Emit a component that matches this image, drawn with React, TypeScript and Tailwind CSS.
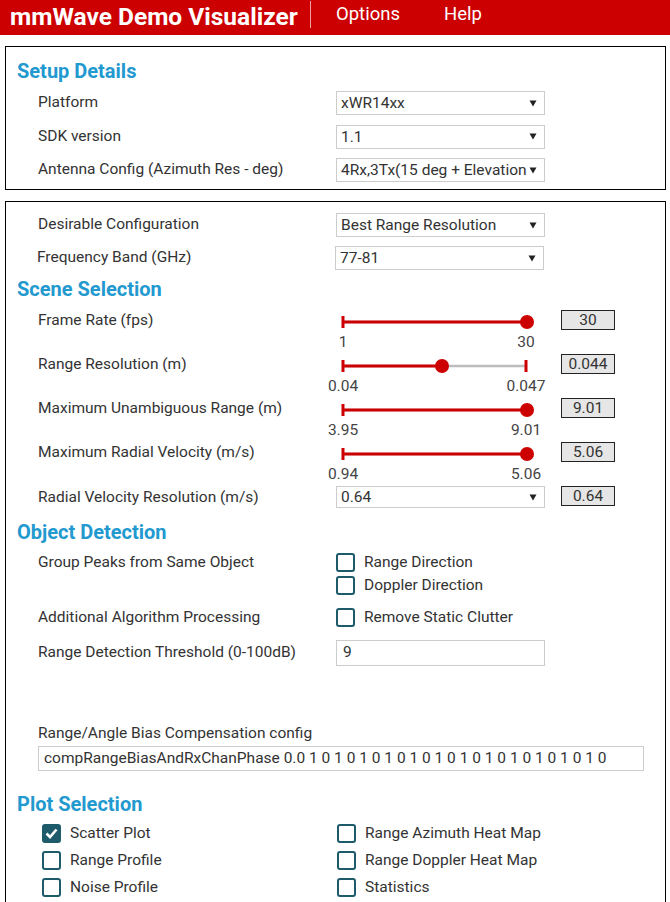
import React from 'react';

const sliders = [
  { label: "Frame Rate (fps)", pos: 191, min: "1", max: "30", val: "30" },
  { label: "Range Resolution (m)", pos: 106, min: "0.04", max: "0.047", val: "0.044" },
  { label: "Maximum Unambiguous Range (m)", pos: 191, min: "3.95", max: "9.01", val: "9.01" },
  { label: "Maximum Radial Velocity (m/s)", pos: 191, min: "0.94", max: "5.06", val: "5.06" },
];

const plots = [
  { left: "Scatter Plot", leftOn: true, right: "Range Azimuth Heat Map" },
  { left: "Range Profile", leftOn: false, right: "Range Doppler Heat Map" },
  { left: "Noise Profile", leftOn: false, right: "Statistics" },
];

function Arrow() {
  return (
    <svg width="8" height="7" viewBox="0 0 8 7" className="shrink-0">
      <path d="M0.5 0.5h7L4 6.5z" fill="#222" />
    </svg>
  );
}

function Select({ value, height = "h-[24px]" }: { value: string; height?: string }) {
  return (
    <div className={`${height} w-[209px] border border-[#cccccc] bg-white flex items-center pl-[4px] pr-[7px] text-[#333]`}>
      <span className="flex-1 whitespace-nowrap overflow-hidden pt-[2px]">{value}</span>
      <Arrow />
    </div>
  );
}

function Checkbox({ checked = false }: { checked?: boolean }) {
  return (
    <div
      className={`w-[19px] h-[19px] shrink-0 rounded-[3px] border-2 border-[#1d5a6a] flex items-center justify-center ${
        checked ? "bg-[#1d5a6a]" : "bg-white"
      }`}
    >
      {checked && (
        <svg width="13" height="11" viewBox="0 0 13 11">
          <path d="M1.5 5.5l3.5 3.5 6.5-7.5" fill="none" stroke="#fff" strokeWidth="2.6" />
        </svg>
      )}
    </div>
  );
}

function Slider({ pos }: { pos: number }) {
  return (
    <svg width="209" height="24" className="block">
      <line x1="7" y1="14" x2="190" y2="14" stroke="#bdbdbd" strokeWidth="2.5" />
      <line x1="7" y1="14" x2={pos} y2="14" stroke="#cc0000" strokeWidth="3" />
      <line x1="7" y1="8" x2="7" y2="20" stroke="#cc0000" strokeWidth="3" />
      <line x1="190" y1="8" x2="190" y2="20" stroke="#cc0000" strokeWidth="3" />
      <circle cx={pos} cy="14" r="7" fill="#cc0000" />
    </svg>
  );
}

function Heading({ children, className = "" }: { children: React.ReactNode; className?: string }) {
  return (
    <div className={`pl-[11px] text-[20px] font-bold leading-[24px] text-[#2299cf] ${className}`}>{children}</div>
  );
}

export default function App() {
  return (
    <div className="w-[670px] h-[902px] overflow-hidden bg-white font-['Roboto',sans-serif] text-[15.5px] text-[#333]">
      {/* top bar */}
      <div className="h-[35px] bg-[#cc0000] flex items-start text-white">
        <div className="w-[310px] pl-[10px] text-[24.5px] font-bold leading-[33px] whitespace-nowrap">mmWave Demo Visualizer</div>
        <div className="w-px h-[27px] mt-[1px] bg-[#f0a0a0]" />
        <div className="ml-[25px] text-[18.5px] leading-[29px]">Options</div>
        <div className="ml-[44px] text-[18.5px] leading-[29px]">Help</div>
      </div>

      {/* setup details */}
      <div className="mt-[11px] ml-[5px] w-[661px] border border-black pt-[12px] pb-[7px]">
        <Heading>Setup Details</Heading>
        <div className="pl-[32px] mt-[8px] flex flex-col gap-[9.5px]">
          <div className="flex items-center">
            <div className="w-[298px]">Platform</div>
            <Select value="xWR14xx" />
          </div>
          <div className="flex items-center">
            <div className="w-[298px]">SDK version</div>
            <Select value="1.1" />
          </div>
          <div className="flex items-center">
            <div className="w-[298px]">Antenna Config (Azimuth Res - deg)</div>
            <Select value="4Rx,3Tx(15 deg + Elevation" />
          </div>
        </div>
      </div>

      {/* scene / detection / plots */}
      <div className="mt-[11px] ml-[5px] w-[661px] h-[720px] border border-black pt-[11px]">
        <div className="pl-[32px] flex flex-col gap-[9px]">
          <div className="flex items-center">
            <div className="w-[298px]">Desirable Configuration</div>
            <Select value="Best Range Resolution" />
          </div>
          <div className="flex items-center">
            <div className="w-[298px] -ml-px">Frequency Band (GHz)</div>
            <Select value="77-81" />
          </div>
        </div>

        <Heading className="mt-[7px]">Scene Selection</Heading>

        <div className="pl-[32px] mt-[7px]">
          {sliders.map((s) => (
            <div key={s.label} className="flex items-start">
              <div className="w-[298px] leading-[24px]">{s.label}</div>
              <div className="w-[209px]">
                <Slider pos={s.pos} />
                <div className="ml-[7px] w-[183px] h-[20px] flex justify-between leading-[20px] text-[#444]">
                  <span className="w-0 flex justify-center whitespace-nowrap">{s.min}</span>
                  <span className="w-0 flex justify-center whitespace-nowrap">{s.max}</span>
                </div>
              </div>
              <div className="ml-[16px] mt-[2px] w-[54px] h-[20px] border border-[#222] bg-[#e6e6e6] text-center leading-[18px]">
                {s.val}
              </div>
            </div>
          ))}
          <div className="flex items-start mt-[2px]">
            <div className="w-[298px] leading-[22px]">Radial Velocity Resolution (m/s)</div>
            <Select value="0.64" height="h-[22px]" />
            <div className="ml-[16px] w-[54px] h-[20px] border border-[#222] bg-[#e6e6e6] text-center leading-[18px]">0.64</div>
          </div>
        </div>

        <Heading className="mt-[12px]">Object Detection</Heading>

        <div className="pl-[32px]">
          <div className="flex items-start mt-[9px]">
            <div className="w-[298px] leading-[19px]">Group Peaks from Same Object</div>
            <div className="flex flex-col gap-[4px]">
              <div className="flex items-center gap-[9px] h-[19px]">
                <Checkbox />
                <span>Range Direction</span>
              </div>
              <div className="flex items-center gap-[9px] h-[19px]">
                <Checkbox />
                <span>Doppler Direction</span>
              </div>
            </div>
          </div>
          <div className="flex items-center mt-[13px] h-[19px]">
            <div className="w-[298px]">Additional Algorithm Processing</div>
            <div className="flex items-center gap-[9px]">
              <Checkbox />
              <span>Remove Static Clutter</span>
            </div>
          </div>
          <div className="flex items-center mt-[13px]">
            <div className="w-[298px]">Range Detection Threshold (0-100dB)</div>
            <div className="w-[209px] h-[26px] border border-[#cccccc] pl-[6px] leading-[22px]">9</div>
          </div>

          <div className="mt-[57px] leading-[20px]">Range/Angle Bias Compensation config</div>
          <div className="mt-[3px] w-[606px] h-[25px] border border-[#cccccc] pl-[5px] leading-[23px] whitespace-nowrap">
            compRangeBiasAndRxChanPhase 0.0 1 0 1 0 1 0 1 0 1 0 1 0 1 0 1 0 1 0 1 0 1 0 1 0
          </div>
        </div>

        <Heading className="mt-[21px]">Plot Selection</Heading>

        <div className="pl-[36px] mt-[8px] flex flex-col gap-[8px]">
          {plots.map((p) => (
            <div key={p.left} className="flex items-center h-[19px]">
              <div className="w-[295px] flex items-center gap-[9px]">
                <Checkbox checked={p.leftOn} />
                <span>{p.left}</span>
              </div>
              <div className="flex items-center gap-[9px]">
                <Checkbox />
                <span>{p.right}</span>
              </div>
            </div>
          ))}
        </div>
      </div>
    </div>
  );
}
